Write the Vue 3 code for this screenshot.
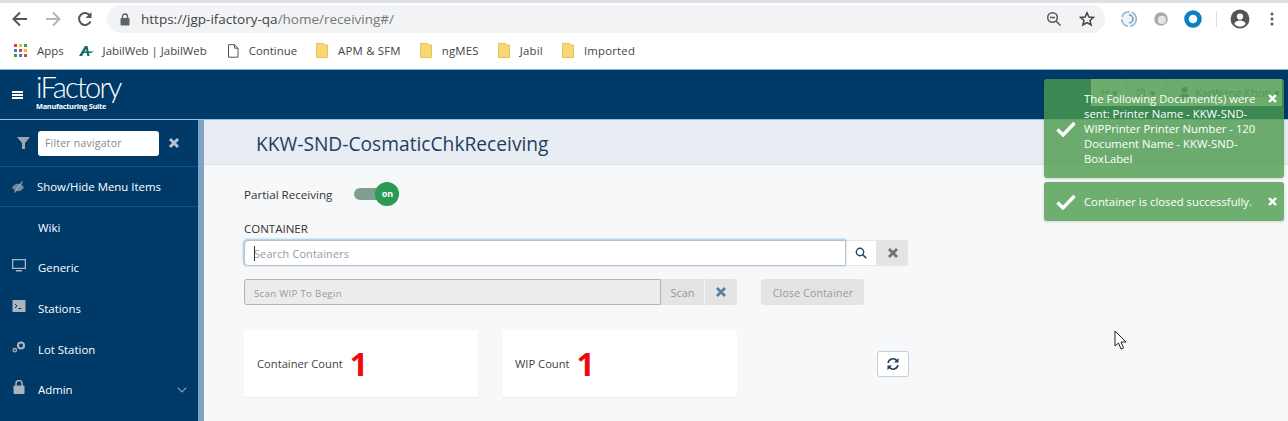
<template>
  <div class="page">
    <!-- browser chrome -->
    <div class="tabstrip"></div>
    <div class="toolbar">
      <svg class="nav" width="18" height="18" viewBox="0 0 18 18"><path d="M16 9H3M9 2.500 2.500 9 9 15.500" fill="none" stroke="#555" stroke-width="2"/></svg>
      <svg class="nav" width="18" height="18" viewBox="0 0 18 18"><path d="M2 9h13M9 2.500 15.500 9 9 15.500" fill="none" stroke="#b5b5b5" stroke-width="2"/></svg>
      <svg class="nav" width="18" height="18" viewBox="0 0 18 18"><path d="M14.500 11.500A6 6 0 1 1 14 5.500" fill="none" stroke="#555" stroke-width="2"/><path d="M15.500 2v6h-6z" fill="#555"/></svg>
      <div class="omnibox">
        <svg width="10" height="13" viewBox="0 0 10 13"><rect x="0.500" y="5" width="9" height="7.500" rx="1" fill="#5f6368"/><path d="M2.500 5V3.500a2.500 2.500 0 0 1 5 0V5" fill="none" stroke="#5f6368" stroke-width="1.400"/></svg>
        <span class="url"><span class="host">https://jgp-ifactory-qa</span>/home/receiving#/</span>
        <svg class="zoom-out" width="16" height="16" viewBox="0 0 16 16"><circle cx="6.500" cy="6.500" r="4.800" fill="none" stroke="#555" stroke-width="1.500"/><path d="M10 10l4.500 4.500M4 6.500h5" stroke="#555" stroke-width="1.500"/></svg>
        <svg class="star" width="16" height="16" viewBox="0 0 16 16"><path d="M8 1.700l1.900 4.300 4.600.4-3.500 3 1.100 4.600L8 11.600 3.900 14l1.100-4.600-3.500-3 4.600-.4z" fill="none" stroke="#444" stroke-width="1.500"/></svg>
      </div>
      <div class="extensions">
        <svg width="18" height="18" viewBox="0 0 16 16"><circle cx="8" cy="8" r="6.500" fill="#eef4f9" stroke="#8fb2cd" stroke-width="1.400" stroke-dasharray="9 2"/><path d="M8 4.500a3.500 3.500 0 0 1 0 7" fill="none" stroke="#6f9cc0" stroke-width="1.400"/></svg>
        <svg width="18" height="18" viewBox="0 0 16 16"><circle cx="8" cy="8" r="6" fill="#a9a9a9"/><circle cx="8.800" cy="8.800" r="3.600" fill="#e6e6e6"/></svg>
        <svg width="18" height="18" viewBox="0 0 16 16"><circle cx="8" cy="8" r="5.800" fill="none" stroke="#0a7fc4" stroke-width="4"/></svg>
        <span class="divider"></span>
        <svg class="avatar" width="20" height="20" viewBox="0 0 18 18"><circle cx="9" cy="9" r="8.500" fill="#555"/><circle cx="9" cy="6.800" r="2.800" fill="#fff"/><path d="M3.800 13.600c1-2.400 3-3.200 5.200-3.200s4.200.8 5.200 3.200a7 7 0 0 1-10.400 0z" fill="#fff"/></svg>
        <svg class="dots" width="4" height="14" viewBox="0 0 4 14"><circle cx="2" cy="2" r="1.500" fill="#555"/><circle cx="2" cy="7" r="1.500" fill="#555"/><circle cx="2" cy="12" r="1.500" fill="#555"/></svg>
      </div>
    </div>
    <div class="bookmarks">
      <div class="bookmark apps">
        <svg width="14" height="14" viewBox="0 0 14 14">
          <rect v-for="dot in appDots" :key="dot.id" :x="dot.x" :y="dot.y" width="3" height="3" :fill="dot.color"/>
        </svg>
        Apps
      </div>
      <div class="bookmark jabil">
        <svg width="15" height="12" viewBox="0 0 15 12"><path d="M0 11 6 1h2.500l2 10H8.300L7 4 3 11zM3 6.500h12l-3 1.500H3z" fill="#0f6a6a"/></svg>
        JabilWeb | JabilWeb
      </div>
      <div class="bookmark continue">
        <svg width="12" height="14" viewBox="0 0 12 14"><path d="M1.500.700h6l3.500 3.500v9H1.500zM7.500.700v3.500H11" fill="#fff" stroke="#555"/></svg>
        Continue
      </div>
      <div v-for="folder in folders" :key="folder" class="bookmark folder">
        <svg width="12" height="15" viewBox="0 0 12 15"><path d="M.500.500h7l1 1.500h3v12.500H.500z" fill="#fad774" stroke="#e6c25c"/></svg>
        {{ folder }}
      </div>
    </div>

    <!-- app header -->
    <header class="app-header">
      <div class="burger"><i></i><i></i><i></i></div>
      <div class="logo">
        <span class="logo-name">iFactory</span>
        <span class="logo-sub">Manufacturing Suite</span>
      </div>
      <div class="header-tools">
        <span class="tool first">H ▾</span>
        <span class="tool second">
          <svg width="12" height="11" viewBox="0 0 12 11"><rect x="0.500" y="0.500" width="11" height="10" fill="none" stroke="currentColor"/><path d="M1 1l5 4 5-4" fill="none" stroke="currentColor"/></svg>
          ▾
        </span>
        <span class="tool user">
          <svg width="11" height="12" viewBox="0 0 11 12"><circle cx="5.500" cy="3" r="3" fill="currentColor"/><path d="M0 12c0-4 2-5 5.500-5s5.500 1 5.500 5z" fill="currentColor"/></svg>
          KarWeng Khoo ▾
        </span>
      </div>
    </header>

    <div class="body">
      <aside class="sidebar">
        <div class="filter">
          <svg width="13" height="12" viewBox="0 0 13 12"><path d="M0 0h13L8 6v6H5V6z" fill="#9aa6b2"/></svg>
          <div class="filter-input">Filter navigator</div>
          <svg class="x" width="12" height="12" viewBox="0 0 12 12"><path d="M2 2l8 8M10 2l-8 8" stroke="#b9c2cc" stroke-width="3"/></svg>
        </div>
        <div class="show-hide">
          <svg class="menu-icon" width="13" height="12" viewBox="0 0 13 12"><path d="M0.500 6.500c2-2.800 3.800-3.800 6-3.800s4 1 6 3.800c-2 2.800-3.800 3.800-6 3.800s-4-1-6-3.800z" fill="#75899e"/><path d="M3 11.500 11 0.500" stroke="#a5b2bf" stroke-width="1.200"/></svg>
          <span>Show/Hide Menu Items</span>
        </div>
        <nav class="menu">
          <div class="item">
            <span class="menu-icon"></span>
            <span>Wiki</span>
          </div>
          <div class="item">
            <svg class="menu-icon" width="14" height="13" viewBox="0 0 14 13"><path d="M0 0h14v10H0zM1.300 1.300v7.400h11.400V1.300zM4 11h6v1.500H4z" fill="#a9b4bf" fill-rule="evenodd"/></svg>
            <span>Generic</span>
          </div>
          <div class="item">
            <svg class="menu-icon" width="13" height="12" viewBox="0 0 13 12"><path d="M0 0h13v12H0z" fill="#a9b4bf"/><path d="M2.500 4 4.500 6 2.500 8M6 8.500h3" fill="none" stroke="#003a69"/></svg>
            <span>Stations</span>
          </div>
          <div class="item">
            <svg class="menu-icon" width="14" height="12" viewBox="0 0 14 12"><circle cx="9" cy="4.500" r="3" fill="none" stroke="#a9b4bf" stroke-width="2.200"/><circle cx="2.800" cy="9.200" r="1.700" fill="none" stroke="#a9b4bf" stroke-width="1.300"/></svg>
            <span>Lot Station</span>
          </div>
          <div class="item">
            <svg class="menu-icon" width="11" height="14" viewBox="0 0 11 14"><rect y="5.500" width="11" height="8.500" rx="1" fill="#a9b4bf"/><path d="M2.500 5.500V3.500a3 3 0 0 1 6 0v2" fill="none" stroke="#a9b4bf" stroke-width="1.500"/></svg>
            <span>Admin</span>
            <svg class="chevron" width="10" height="6" viewBox="0 0 10 6"><path d="M.700.700 5 5 9.300.700" fill="none" stroke="#8ea2b6" stroke-width="1.200"/></svg>
          </div>
        </nav>
      </aside>
      <div class="sidebar-edge"></div>

      <main class="main">
        <div class="title-bar">KKW-SND-CosmaticChkReceiving</div>
        <div class="content">
          <div class="partial">
            <span>Partial Receiving</span>
            <div class="switch"><span class="knob">on</span></div>
          </div>
          <label class="container-label">CONTAINER</label>
          <div class="row search-row">
            <div class="search-input"><span class="caret"></span>Search Containers</div>
            <button class="addon search-btn">
              <svg width="12" height="12" viewBox="0 0 12 12"><circle cx="5" cy="5" r="3.700" fill="none" stroke="#1f3f5f" stroke-width="1.400"/><path d="M7.800 7.800l3.500 3.500" stroke="#1f3f5f" stroke-width="1.600"/></svg>
            </button>
            <button class="addon clear-btn">
              <svg width="12" height="12" viewBox="0 0 12 12"><path d="M2 2l8 8M10 2l-8 8" stroke="#6d7278" stroke-width="2.800"/></svg>
            </button>
          </div>
          <div class="row scan-row">
            <div class="scan-input">Scan WIP To Begin</div>
            <button class="addon scan-btn">Scan</button>
            <button class="addon scan-clear">
              <svg width="12" height="12" viewBox="0 0 12 12"><path d="M2 2l8 8M10 2l-8 8" stroke="#5d7f9f" stroke-width="2.800"/></svg>
            </button>
            <button class="close-container">Close Container</button>
          </div>
          <div class="row counts">
            <div class="count-card">
              <span>Container Count</span><b>1</b>
            </div>
            <div class="count-card wip">
              <span>WIP Count</span><b>1</b>
            </div>
            <button class="refresh">
              <svg width="14" height="14" viewBox="0 0 14 14"><path d="M2 6a5 5 0 0 1 9-2M12 8a5 5 0 0 1-9 2" fill="none" stroke="#1f3f5f" stroke-width="1.500"/><path d="M12.500 1v4.500H8zM1.500 13V8.500H6z" fill="#1f3f5f"/></svg>
            </button>
          </div>
        </div>
      </main>
    </div>

    <!-- toasts -->
    <div class="toasts">
      <div v-for="toast in toasts" :key="toast" class="toast">
        <svg class="check" width="20" height="16" viewBox="0 0 20 16"><path d="M1.500 8.500 7 14 18.500 2" fill="none" stroke="#fff" stroke-width="3.400"/></svg>
        <p>{{ toast }}</p>
        <svg class="toast-x" width="9" height="9" viewBox="0 0 9 9"><path d="M1 1l7 7M8 1 1 8" stroke="#fff" stroke-width="2.400"/></svg>
      </div>
    </div>

    <!-- mouse pointer -->
    <svg class="pointer" width="14" height="20" viewBox="0 0 14 20"><path d="M1 1v15l3.500-3 2.500 6 2.500-1-2.500-6h5z" fill="#fff" stroke="#222"/></svg>
  </div>
</template>

<script setup>
const colors = ["#d8433a", "#f2b632", "#3f9a4f", "#3f78d8", "#d8433a", "#f2b632", "#3f9a4f", "#3f78d8", "#d8433a"];
const appDots = colors.map((color, i) => ({
  id: i,
  color,
  x: (i % 3) * 5,
  y: Math.floor(i / 3) * 5,
}));

const folders = ["APM & SFM", "ngMES", "Jabil", "Imported"];

const toasts = [
  "The Following Document(s) were sent: Printer Name - KKW-SND-WIPPrinter Printer Number - 120 Document Name - KKW-SND-BoxLabel",
  "Container is closed successfully.",
];
</script>

<style>
html,
body {
  margin: 0;
  overflow: hidden;
}
</style>

<style scoped>
.page {
  position: relative;
  width: 1288px;
  height: 421px;
  overflow: hidden;
  background: #fff;
  font-family: "Open Sans", "Liberation Sans", sans-serif;
  color: #333;
}

.tabstrip {
  height: 3px;
  background: #dee1e6;
}

.toolbar {
  height: 32px;
  display: flex;
  align-items: center;
  padding-left: 11px;
}

.nav {
  margin-right: 14.500px;
  flex: none;
}

.omnibox {
  width: 998px;
  height: 28px;
  padding: 0 8px 0 13px;
  box-sizing: border-box;
  display: flex;
  align-items: center;
  background: #f1f3f4;
  border-radius: 14px;
  margin-left: -1.500px;
  flex: none;
}

.url {
  margin-left: 11px;
  font-size: 13.500px;
  color: #777;
}

.host {
  color: #444;
}

.zoom-out {
  margin-left: auto;
}

.star {
  margin-left: 17px;
  margin-right: 2px;
}

.extensions {
  display: flex;
  align-items: center;
  margin-left: 15px;
  gap: 14px;
}

.divider {
  width: 1px;
  height: 16px;
  background: #ddd;
}

.avatar {
  margin-left: -1px;
}

.dots {
  margin-left: 6px;
}

.bookmarks {
  height: 34px;
  padding: 0 0 3px 14px;
  display: flex;
  align-items: center;
  box-sizing: border-box;
  font-size: 11.400px;
  color: #444;
  gap: 19px;
}

.bookmark {
  display: flex;
  align-items: center;
  gap: 10px;
}

.apps {
  gap: 9px;
}

.jabil {
  gap: 9px;
  margin-left: -4px;
}

.continue {
  margin-left: 1px;
}

.folder {
  letter-spacing: 0.200px;
}

.app-header {
  height: 51px;
  display: flex;
  align-items: center;
  background: #003a69;
  border-top: 1px solid #8fb0c8;
  box-sizing: border-box;
  border-bottom: 1px solid #9fc3d6;
}

.burger {
  width: 11px;
  margin-left: 12px;
  display: flex;
  flex-direction: column;
  gap: 1px;
}

.burger i {
  display: block;
  height: 2px;
  background: #fff;
}

.logo {
  margin-left: 13px;
  margin-top: -5px;
  display: flex;
  flex-direction: column;
  color: #fff;
}

.logo-name {
  font-family: "Lato", sans-serif;
  font-weight: 300;
  font-size: 29px;
  line-height: 26px;
  letter-spacing: -1.800px;
}

.logo-sub {
  margin-top: 2.500px;
  font-size: 7.400px;
  font-weight: 700;
  line-height: 8px;
  letter-spacing: -0.300px;
}

.header-tools {
  margin-left: auto;
  margin-right: 6px;
  display: flex;
  align-items: center;
  color: #777;
  font-size: 11px;
  background: #f0f0f0;
  height: 27px;
  margin-top: -4px;
  width: 191px;
  white-space: nowrap;
}

.tool {
  padding: 0 10px;
  box-sizing: border-box;
  display: flex;
  align-items: center;
  gap: 5px;
  height: 100%;
  border-right: 1px solid #ccc;
}

.first {
  width: 36px;
}

.second {
  width: 40px;
}

.tool.user {
  padding-left: 12px;
  padding-right: 0;
  border-right: none;
}

.body {
  display: flex;
  height: 301px;
}

.sidebar {
  width: 198px;
  flex: none;
  background: #003a69;
  color: #fff;
  font-size: 12px;
}

.filter {
  height: 47px;
  display: flex;
  align-items: center;
  padding-left: 17px;
  border-bottom: 1px solid #1f5280;
  box-sizing: border-box;
}

.filter-input {
  width: 121px;
  height: 25px;
  margin-left: 8px;
  padding-left: 7px;
  box-sizing: border-box;
  background: #fff;
  border-radius: 3px;
  color: #888;
  font-size: 10.500px;
  line-height: 25px;
  letter-spacing: 0.200px;
}

.x {
  margin-left: 9px;
}

.show-hide {
  height: 40px;
  display: flex;
  align-items: center;
  padding-left: 11px;
  box-sizing: border-box;
  border-bottom: 1px solid #1f5280;
  font-size: 11.400px;
}

.menu-icon {
  width: 14px;
  flex: none;
  margin-right: 12px;
}

.item {
  height: 40.600px;
  display: flex;
  align-items: center;
  padding: 0 11px 0 12px;
  font-size: 11.400px;
}

.item .menu-icon {
  margin-top: -5px;
}

.chevron {
  margin-left: auto;
}

.sidebar-edge {
  width: 6px;
  flex: none;
  background: #7ea3c4;
}

.main {
  flex: 1;
  background: #f7f8fa;
}

.title-bar {
  height: 45px;
  padding-left: 52px;
  line-height: 47px;
  box-sizing: border-box;
  background: #e8ecf3;
  border-bottom: 1px solid #dfe3e8;
  color: #1f4060;
  font-size: 19.200px;
}

.content {
  padding: 0 0 0 40px;
  font-size: 11px;
  color: #333;
}

.partial {
  height: 30px;
  margin-top: 14px;
  display: flex;
  align-items: center;
  font-size: 11.600px;
}

.switch {
  position: relative;
  width: 45px;
  height: 12px;
  margin-left: 22px;
  background: #7e9f8d;
  border-radius: 6px;
}

.knob {
  position: absolute;
  top: -6px;
  right: 0;
  width: 24px;
  height: 24px;
  border-radius: 50%;
  background: #2a9a54;
  color: #fff;
  font-size: 9px;
  font-weight: 700;
  line-height: 23px;
  text-align: center;
}

.container-label {
  display: block;
  margin-top: 12px;
  line-height: 15px;
  font-size: 11.500px;
  color: #333;
}

.row {
  display: flex;
}

.search-row {
  margin-top: 4px;
  height: 26px;
}

.search-input {
  width: 602px;
  box-sizing: border-box;
  height: 26px;
  padding-left: 9px;
  line-height: 25px;
  font-size: 10.800px;
  color: #999;
  letter-spacing: 0.200px;
  background: #fff;
  border: 1px solid #b9c0c8;
  border-radius: 4px 0 0 4px;
  box-shadow: 0 -1px 2px #a5cbe8, -1px 0 2px #a5cbe8;
  position: relative;
}

.caret {
  position: absolute;
  left: 9px;
  top: 5px;
  height: 15px;
  width: 1px;
  background: #333;
}

.addon {
  margin: 0;
  padding: 0;
  border: none;
  height: 26px;
  font-family: inherit;
  display: flex;
  align-items: center;
  justify-content: center;
}

.search-btn {
  width: 31px;
  background: #fff;
  border: 1px solid #e3e5e8;
  border-left: none;
}

.clear-btn {
  width: 31px;
  background: #e4e4e4;
  border-radius: 0 3px 3px 0;
}

.scan-row {
  margin-top: 13px;
  height: 26px;
}

.scan-input {
  width: 417px;
  box-sizing: border-box;
  height: 26px;
  padding-left: 9px;
  line-height: 27px;
  font-size: 9.700px;
  letter-spacing: 0.300px;
  color: #999;
  background: #ececec;
  border: 1px solid #b3b3b3;
  border-radius: 3px 0 0 3px;
}

.scan-btn {
  width: 43px;
  background: #e4e4e4;
  color: #999;
  font-size: 11px;
}

.scan-clear {
  width: 32px;
  background: #e4e4e4;
  margin-left: 1px;
  border-radius: 0 3px 3px 0;
}

.close-container {
  margin-left: 24px;
  width: 103px;
  height: 26px;
  padding: 1px 0 0 1px;
  border: none;
  border-radius: 3px;
  font-family: inherit;
  font-size: 10.500px;
  letter-spacing: 0.200px;
  color: #999;
  background: #e4e4e4;
}

.counts {
  margin-top: 25px;
  align-items: center;
}

.count-card {
  width: 234px;
  height: 67px;
  display: flex;
  align-items: center;
  padding-left: 13px;
  box-sizing: border-box;
  background: #fff;
  border-radius: 3px;
  box-shadow: 0 1px 2px rgba(0, 0, 0, 0.05);
  font-size: 11.200px;
  color: #444;
  margin-right: 24px;
}

.count-card.wip {
  width: 235px;
}

.count-card b {
  margin-left: 7px;
  font-size: 32px;
  font-weight: 700;
  color: #ee0a0a;
  line-height: 30px;
}

.refresh {
  width: 32px;
  height: 26px;
  margin-left: 116px;
  padding: 0;
  display: flex;
  align-items: center;
  justify-content: center;
  background: #fff;
  border: 1px solid #c9ced4;
  border-radius: 3px;
}

.toasts {
  position: absolute;
  top: 79px;
  left: 1044px;
  width: 240px;
  display: flex;
  flex-direction: column;
  gap: 4px;
}

.toast {
  position: relative;
  min-height: 39px;
  box-sizing: border-box;
  padding: 12px 22px 12px 40px;
  background: rgba(75, 156, 76, 0.8);
  border-radius: 3px;
  box-shadow: 0 1px 3px rgba(0, 0, 0, 0.15);
  color: #fff;
  font-size: 11.300px;
  display: flex;
  align-items: center;
}

.toast p {
  margin: 0;
  line-height: 15px;
}

.check {
  position: absolute;
  left: 12px;
  top: 50%;
  margin-top: -8px;
}

.toast-x {
  position: absolute;
  right: 7px;
  top: 15px;
}

.pointer {
  position: absolute;
  left: 1114px;
  top: 330px;
}
</style>
